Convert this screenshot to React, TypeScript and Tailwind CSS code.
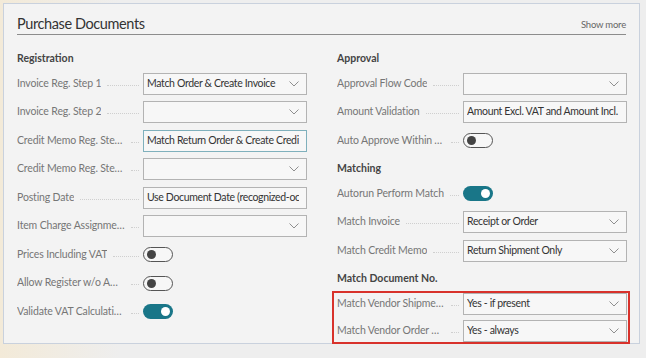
import React from "react";

type Field =
  | { kind: "header"; label: string }
  | { kind: "select"; label: string; value?: string; focus?: boolean; noChevron?: boolean }
  | { kind: "toggle"; label: string; on: boolean };

const left: Field[] = [
  { kind: "header", label: "Registration" },
  { kind: "select", label: "Invoice Reg. Step 1", value: "Match Order & Create Invoice" },
  { kind: "select", label: "Invoice Reg. Step 2" },
  { kind: "select", label: "Credit Memo Reg. Step 1", value: "Match Return Order & Create Credit Memo", focus: true, noChevron: true },
  { kind: "select", label: "Credit Memo Reg. Step 2" },
  { kind: "select", label: "Posting Date", value: "Use Document Date (recognized-ocr)", noChevron: true },
  { kind: "select", label: "Item Charge Assignment" },
  { kind: "toggle", label: "Prices Including VAT", on: false },
  { kind: "toggle", label: "Allow Register w/o Amounts", on: false },
  { kind: "toggle", label: "Validate VAT Calculation", on: true },
];

const right: Field[] = [
  { kind: "header", label: "Approval" },
  { kind: "select", label: "Approval Flow Code" },
  { kind: "select", label: "Amount Validation", value: "Amount Excl. VAT and Amount Incl. VAT", noChevron: true },
  { kind: "toggle", label: "Auto Approve Within Tolerance", on: false },
  { kind: "header", label: "Matching" },
  { kind: "toggle", label: "Autorun Perform Match", on: true },
  { kind: "select", label: "Match Invoice", value: "Receipt or Order" },
  { kind: "select", label: "Match Credit Memo", value: "Return Shipment Only" },
  { kind: "header", label: "Match Document No." },
];

const boxed: Field[] = [
  { kind: "select", label: "Match Vendor Shipment No.", value: "Yes - if present" },
  { kind: "select", label: "Match Vendor Order No.", value: "Yes - always" },
];

function Chevron() {
  return (
    <svg width="10" height="6" viewBox="0 0 10 6" className="shrink-0">
      <path d="M0.5 0.5 L5 5 L9.5 0.5" fill="none" stroke="#8f8f8f" strokeWidth="1" />
    </svg>
  );
}

function Label({ text }: { text: string }) {
  return (
    <div className="flex w-[126px] shrink-0 items-center pr-[4px]">
      <span className="truncate text-[10.5px] tracking-[-0.15px] text-[#767676]">{text}</span>
      <span className="ml-[6px] mt-[3px] min-w-[8px] flex-1 border-b border-dotted border-[#cfcfcf]" />
    </div>
  );
}

function Row({ f, h = "h-[28.5px]" }: { f: Field; h?: string }) {
  if (f.kind === "header") {
    return (
      <div className="mt-[2.5px] flex h-[22px] items-center text-[10.5px] font-bold text-[#444]">{f.label}</div>
    );
  }
  return (
    <div className={"flex items-center " + h}>
      <Label text={f.label} />
      {f.kind === "select" ? (
        <div
          className={
            "flex h-[22px] w-[164px] items-center overflow-hidden border bg-[#f7f7f7] pl-[3px] pr-[7px] " +
            (f.focus ? "border-[#7fb0bc]" : "border-[#b3b3b3]")
          }
        >
          <span className="flex-1 overflow-hidden whitespace-nowrap text-[10.5px] tracking-[-0.35px] text-[#333]">
            {f.value ?? ""}
          </span>
          {!f.noChevron && <Chevron />}
        </div>
      ) : (
        <div
          className={
            "flex h-[15px] w-[30px] items-center rounded-full px-[3px] " +
            (f.on ? "justify-end bg-[#197688]" : "justify-start border border-[#555] bg-[#f7f7f7]")
          }
        >
          <span className={"h-[9px] w-[9px] rounded-full " + (f.on ? "bg-white" : "bg-[#444]")} />
        </div>
      )}
    </div>
  );
}

export default function App() {
  return (
    <div
      className="h-[358px] w-[646px] overflow-hidden bg-[linear-gradient(to_right,#f3ead8_0px,#eeeeee_120px)] pt-[3px] pl-[3px]"
      style={{ fontFamily: 'Lato, "Noto Sans", sans-serif' }}
    >
      <div className="h-[341px] w-[637px] border border-[#c9d1dd] bg-[#f3f3f3] px-[13px]">
        <div className="flex h-[31px] items-end justify-between border-b border-[#8c8c8c]">
          <span className="text-[14.5px] leading-[20px] tracking-[-0.4px] text-[#333]">Purchase Documents</span>
          <span className="pb-[2px] text-[9.5px] tracking-[-0.2px] text-[#666]">Show more</span>
        </div>
        <div className="mt-[12px] grid grid-cols-[290px_290px] gap-x-[30px]">
          <div className="-mt-[2px]">
            {left.map((f, i) => (
              <Row key={i} f={f} />
            ))}
          </div>
          <div className="-mt-[2px]">
            {right.map((f, i) => (
              <Row key={i} f={f} />
            ))}
            <div className="-ml-[5px] -mr-[3px] mt-[1px] flex flex-col gap-[5px] border-2 border-[#d8322b] pl-[3px] pr-[1px]">
              {boxed.map((f, i) => (
                <Row key={i} f={f} h="h-[22px]" />
              ))}
            </div>
          </div>
        </div>
      </div>
    </div>
  );
}
